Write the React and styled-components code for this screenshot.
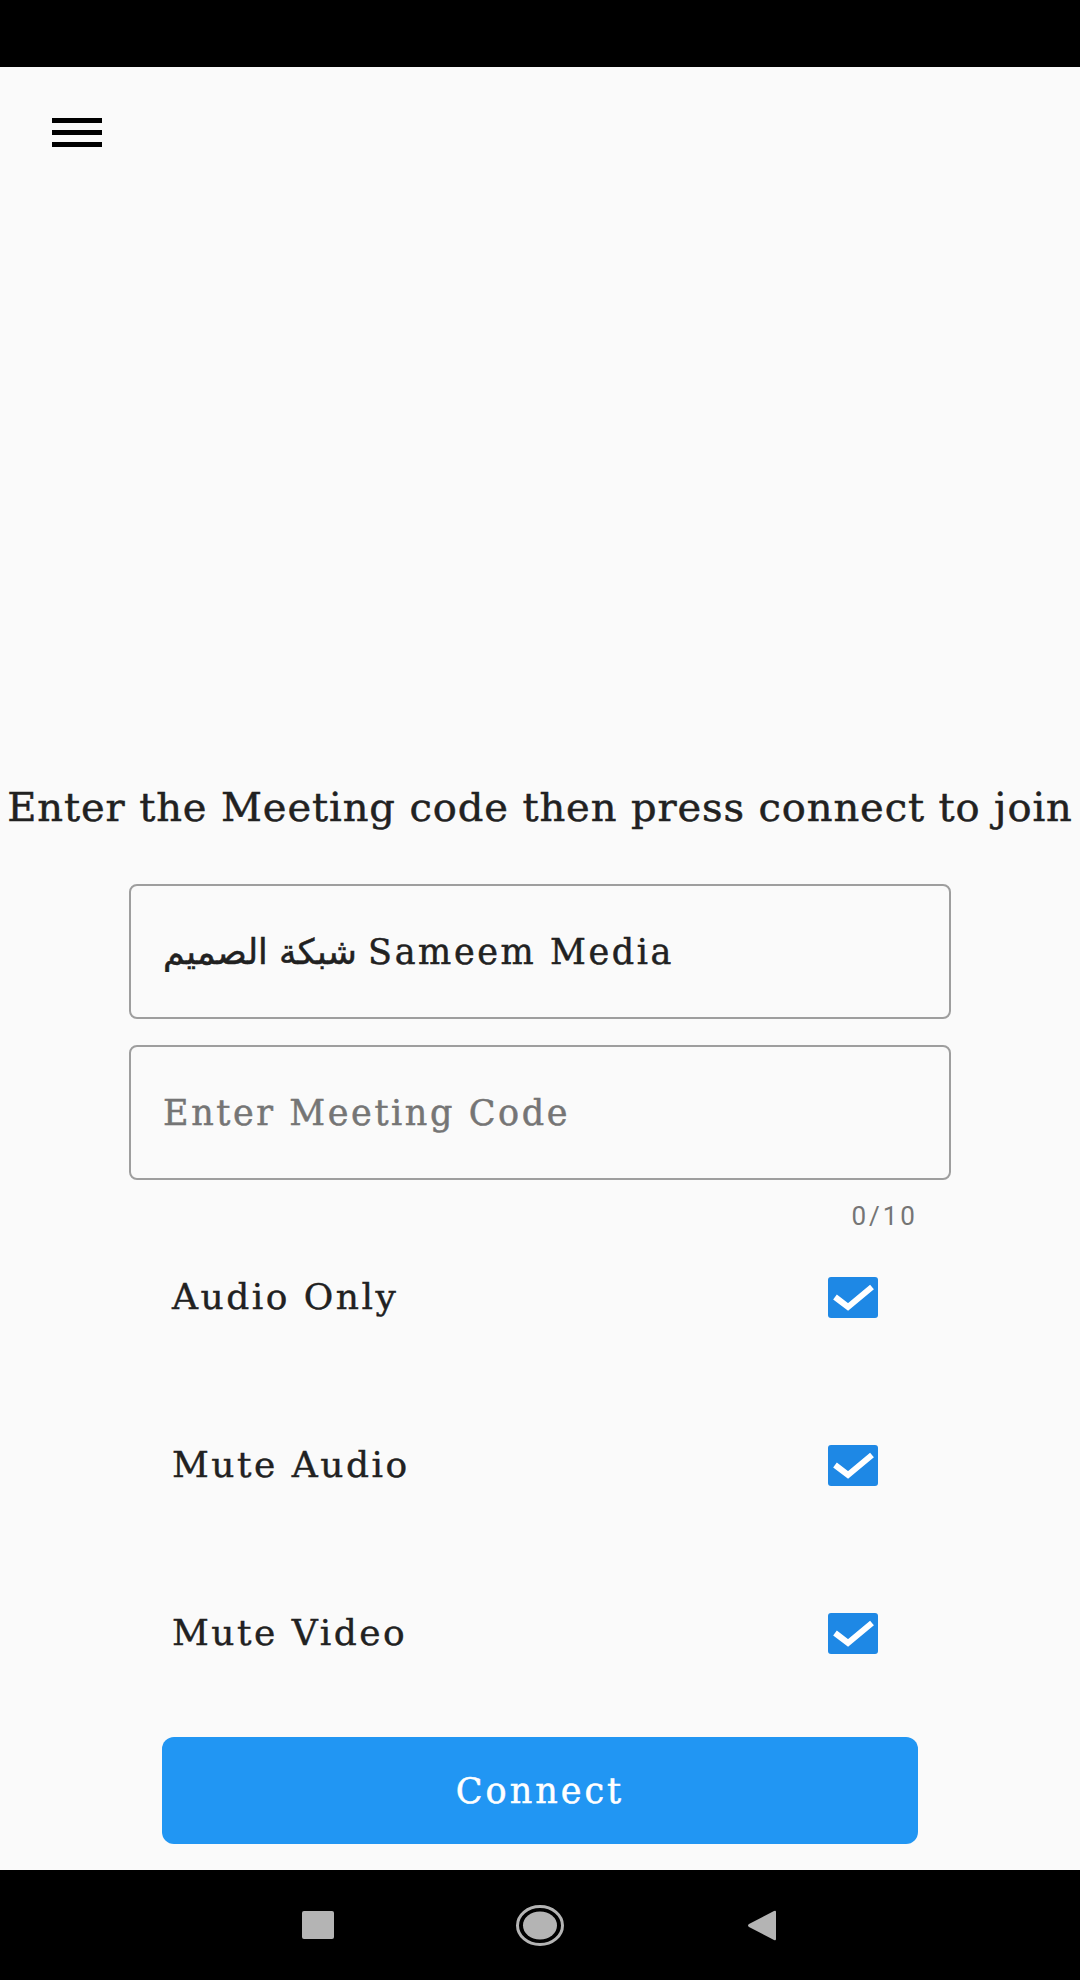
import React from "react";
import styled, { createGlobalStyle } from "styled-components";

const GlobalStyle = createGlobalStyle`
  * {
    box-sizing: border-box;
  }
  body {
    margin: 0;
    background: #fafafa;
    font-family: "DejaVu Serif", "DejaVu Sans", serif;
  }
`;

const options = ["Audio Only", "Mute Audio", "Mute Video"];

function CheckIcon() {
  return (
    <svg width="50" height="41" viewBox="0 0 50 41">
      <rect x="0" y="0" width="50" height="41" rx="3" fill="#1e88e5" />
      <polyline
        points="7,20 20,30 44,10"
        fill="none"
        stroke="#fff"
        strokeWidth="6"
      />
    </svg>
  );
}

function HomeIcon() {
  return (
    <svg width="48" height="41" viewBox="0 0 48 41">
      <ellipse cx="24" cy="20.5" rx="22.5" ry="19" fill="none" stroke="#b4b4b4" strokeWidth="3" />
      <ellipse cx="24" cy="20.5" rx="17" ry="14" fill="#b4b4b4" />
    </svg>
  );
}

function BackIcon() {
  return (
    <svg width="32" height="31" viewBox="0 0 32 31">
      <path d="M30 2 L30 29 Q30 31 28 30 L3 17 Q1 15.5 3 14 L28 1 Q30 0 30 2 Z" fill="#b4b4b4" />
    </svg>
  );
}

export default function App() {
  return (
    <>
      <GlobalStyle />
      <Screen>
        <StatusBar />
        <Main>
          <Header>
            <Hamburger>
              <span />
              <span />
              <span />
            </Hamburger>
          </Header>
          <Title>Enter the Meeting code then press connect to join</Title>
          <Form>
            <Field readOnly value="شبكة الصميم Sameem Media" />
            <Field placeholder="Enter Meeting Code" />
            <Counter>0/10</Counter>
            <OptionList>
              {options.map((label) => (
                <OptionRow key={label}>
                  <OptionLabel>{label}</OptionLabel>
                  <CheckIcon />
                </OptionRow>
              ))}
            </OptionList>
          </Form>
          <ConnectButton>Connect</ConnectButton>
        </Main>
        <NavBar>
          <RecentsIcon />
          <HomeIcon />
          <BackIcon />
        </NavBar>
      </Screen>
    </>
  );
}

const Screen = styled.div`
  min-height: 1980px;
  display: flex;
  flex-direction: column;
`;

const StatusBar = styled.div`
  height: 67px;
  background: #000;
`;

const Main = styled.main`
  flex: 1;
  display: flex;
  flex-direction: column;
  align-items: center;
`;

const Header = styled.header`
  align-self: stretch;
  padding: 51px 0 0 52px;
`;

const Hamburger = styled.div`
  width: 50px;
  height: 29px;
  display: flex;
  flex-direction: column;
  justify-content: space-between;
  span {
    display: block;
    height: 5px;
    background: #000;
  }
`;

const Title = styled.h1`
  margin: 636px 0 0;
  font-size: 40px;
  line-height: 48px;
  font-weight: normal;
  letter-spacing: 0.9px;
  -webkit-text-stroke: 0.5px #212121;
  color: #212121;
  white-space: nowrap;
  text-align: center;
`;

const Form = styled.div`
  width: 822px;
  margin-top: 53px;
  display: flex;
  flex-direction: column;
`;

const Field = styled.input`
  height: 135px;
  margin-bottom: 26px;
  padding: 0 32px;
  border: 2px solid #9e9e9e;
  border-radius: 8px;
  background: transparent;
  font-family: "DejaVu Serif", "DejaVu Sans", serif;
  font-size: 35px;
  letter-spacing: 2.6px;
  -webkit-text-stroke: 0.5px currentColor;
  color: #212121;
  outline: none;
  &::placeholder {
    color: #757575;
  }
  &:last-of-type {
    margin-bottom: 0;
  }
`;

const Counter = styled.div`
  margin-top: 21px;
  padding-right: 33px;
  text-align: right;
  font-family: Roboto, "Noto Sans", sans-serif;
  font-size: 26px;
  letter-spacing: 3px;
  line-height: 30px;
  color: #757575;
`;

const OptionList = styled.div`
  margin-top: 24px;
  padding: 0 73px 0 43px;
  display: flex;
  flex-direction: column;
  gap: 84px;
`;

const OptionRow = styled.div`
  height: 84px;
  display: flex;
  align-items: center;
  justify-content: space-between;
`;

const OptionLabel = styled.span`
  font-size: 36px;
  line-height: 44px;
  letter-spacing: 2.5px;
  -webkit-text-stroke: 0.4px #212121;
  color: #212121;
`;

const ConnectButton = styled.button`
  width: 756px;
  height: 107px;
  margin-top: 62px;
  border: none;
  border-radius: 12px;
  background: #2196f3;
  color: #fff;
  font-family: "DejaVu Serif", serif;
  font-size: 35px;
  letter-spacing: 3px;
  -webkit-text-stroke: 0.5px #fff;
`;

const NavBar = styled.nav`
  height: 110px;
  background: #000;
  display: flex;
  align-items: center;
  justify-content: center;
  gap: 182px;
`;

const RecentsIcon = styled.div`
  width: 32px;
  height: 28px;
  border-radius: 2px;
  background: #b4b4b4;
`;
